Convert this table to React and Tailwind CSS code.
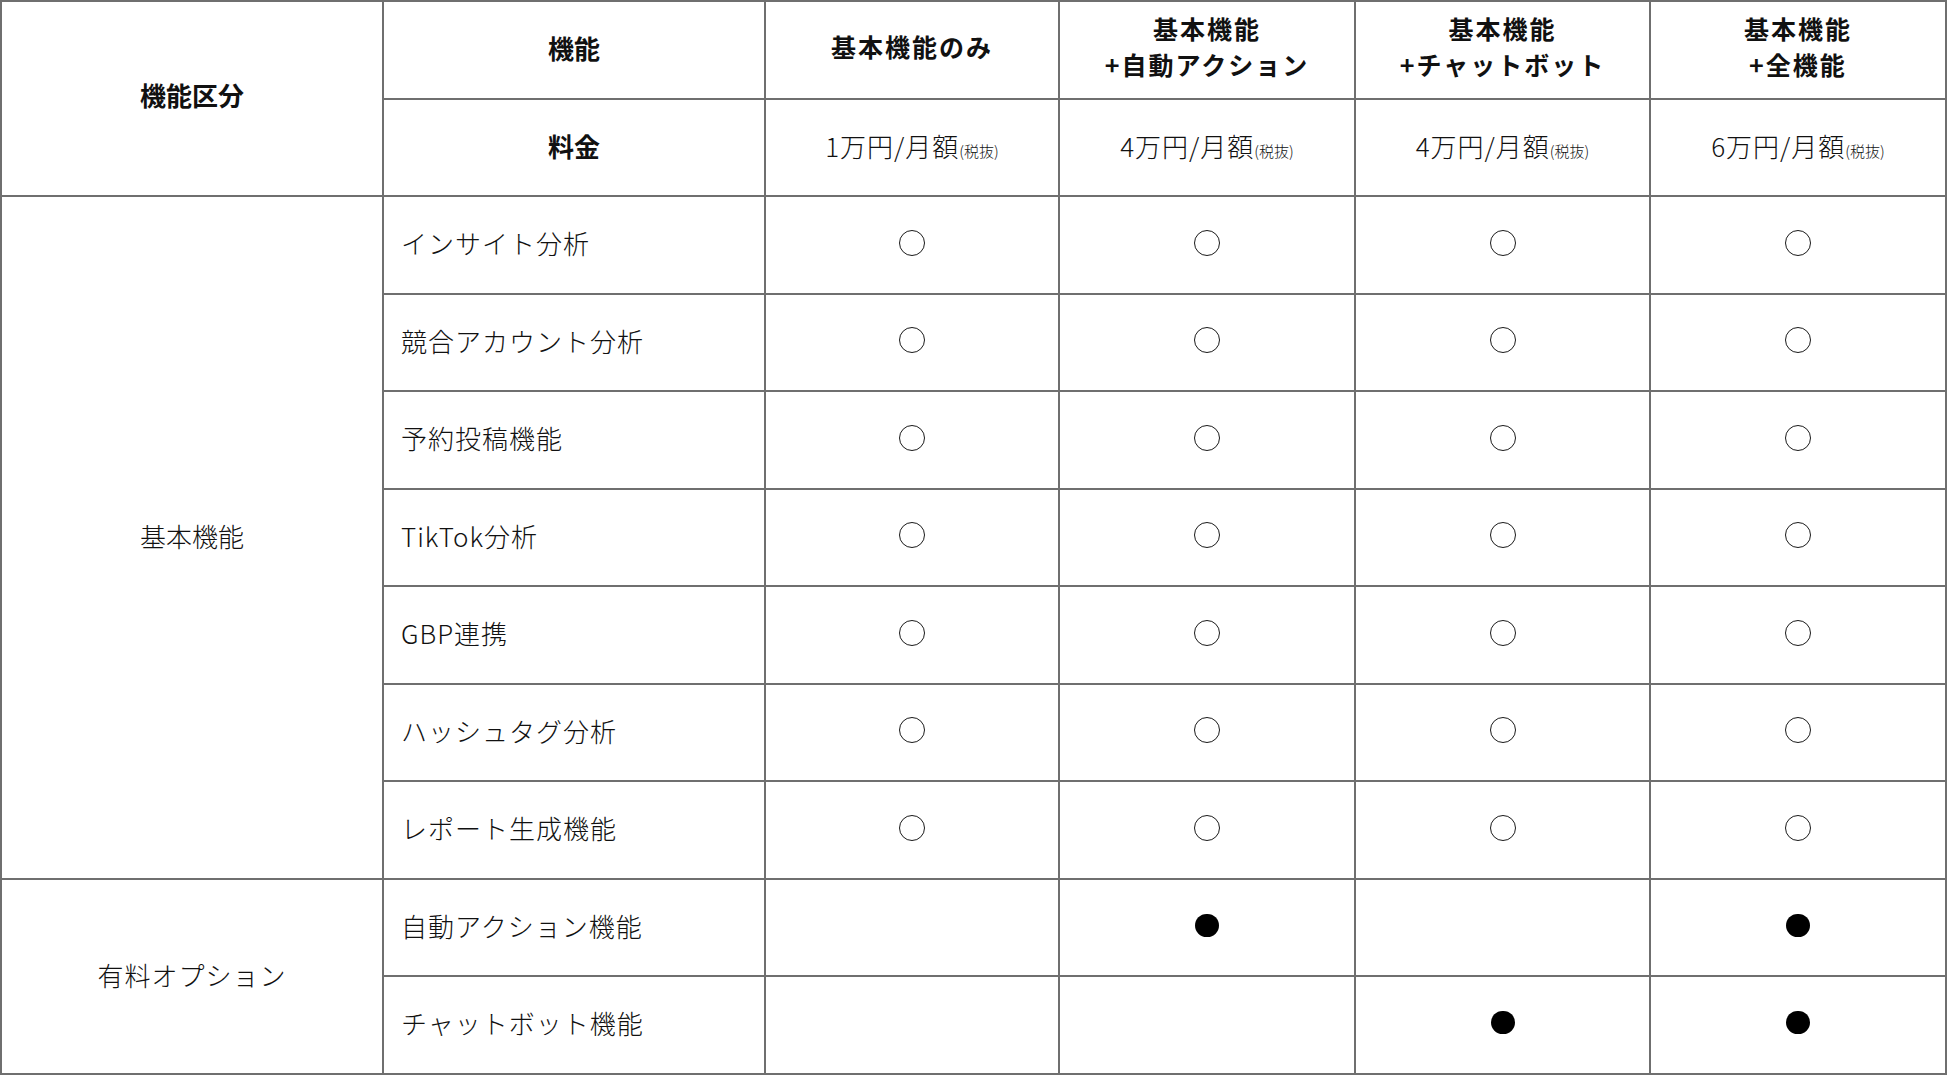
const plans = [
    { id: 'basic', title: ['基本機能のみ'], price: '1万円/月額' },
    { id: 'action', title: ['基本機能', '+自動アクション'], price: '4万円/月額' },
    { id: 'chatbot', title: ['基本機能', '+チャットボット'], price: '4万円/月額' },
    { id: 'all', title: ['基本機能', '+全機能'], price: '6万円/月額' },
];

const basicFeatures = [
    'インサイト分析',
    '競合アカウント分析',
    '予約投稿機能',
    'TikTok分析',
    'GBP連携',
    'ハッシュタグ分析',
    'レポート生成機能',
];

const optionFeatures = [
    { name: '自動アクション機能', plans: [false, true, false, true] },
    { name: 'チャットボット機能', plans: [false, false, true, true] },
];

const cell = "border-2 border-[#6f6f6f] h-[97.5px] p-0 pb-[4px] align-middle";

const OpenMark = () => (
    <span className="inline-block w-[26px] h-[26px] rounded-full border-[1.5px] border-[#1a1a1a]" />
);

const FilledMark = () => (
    <span className="inline-block w-[24px] h-[23px] rounded-full bg-black" />
);

const App = () => {
    return (
        <div className="w-[1950px] h-[1077px] bg-white font-['Noto_Sans_CJK_JP','Noto_Sans',sans-serif] text-[#111]">
            <table className="border-collapse table-fixed w-[1945px]">
                <colgroup>
                    <col className="w-[382px]" />
                    <col className="w-[382px]" />
                    <col className="w-[294px]" />
                    <col className="w-[296px]" />
                    <col className="w-[295px]" />
                    <col className="w-[296px]" />
                </colgroup>
                <tbody>
                    {/* Header */}
                    <tr>
                        <td rowSpan={2} className={`${cell} pb-[8px] text-center text-[26px] font-bold`}>機能区分</td>
                        <td className={`${cell} text-center text-[26px] font-bold`}>機能</td>
                        {plans.map(plan => (
                            <td key={plan.id} className={`${cell} pb-[8px] text-center text-[25px] font-bold leading-[36px] tracking-[2px]`}>
                                {plan.title.map((line, i) => (
                                    <div key={i}>{line}</div>
                                ))}
                            </td>
                        ))}
                    </tr>
                    <tr>
                        <td className={`${cell} text-center text-[26px] font-bold`}>料金</td>
                        {plans.map(plan => (
                            <td key={plan.id} className={`${cell} text-center text-[26px] font-light tracking-[1px]`}>
                                {plan.price}
                                <span className="text-[15px] tracking-normal">(税抜)</span>
                            </td>
                        ))}
                    </tr>

                    {/* 基本機能 */}
                    {basicFeatures.map((name, i) => (
                        <tr key={name}>
                            {i === 0 && (
                                <td rowSpan={basicFeatures.length} className={`${cell} text-center text-[26px] font-light`}>基本機能</td>
                            )}
                            <td className={`${cell} pl-[17px] text-[26px] font-light tracking-[1px]`}>{name}</td>
                            {plans.map(plan => (
                                <td key={plan.id} className={`${cell} text-center`}>
                                    <div className="flex items-center justify-center">
                                        <OpenMark />
                                    </div>
                                </td>
                            ))}
                        </tr>
                    ))}

                    {/* 有料オプション */}
                    {optionFeatures.map((feature, i) => (
                        <tr key={feature.name}>
                            {i === 0 && (
                                <td rowSpan={optionFeatures.length} className={`${cell} text-center text-[26px] font-light tracking-[1px]`}>有料オプション</td>
                            )}
                            <td className={`${cell} pl-[17px] text-[26px] font-light tracking-[1px]`}>{feature.name}</td>
                            {feature.plans.map((on, j) => (
                                <td key={j} className={`${cell} text-center`}>
                                    {on && (
                                        <div className="flex items-center justify-center">
                                            <FilledMark />
                                        </div>
                                    )}
                                </td>
                            ))}
                        </tr>
                    ))}
                </tbody>
            </table>
        </div>
    );
};

export default App;
